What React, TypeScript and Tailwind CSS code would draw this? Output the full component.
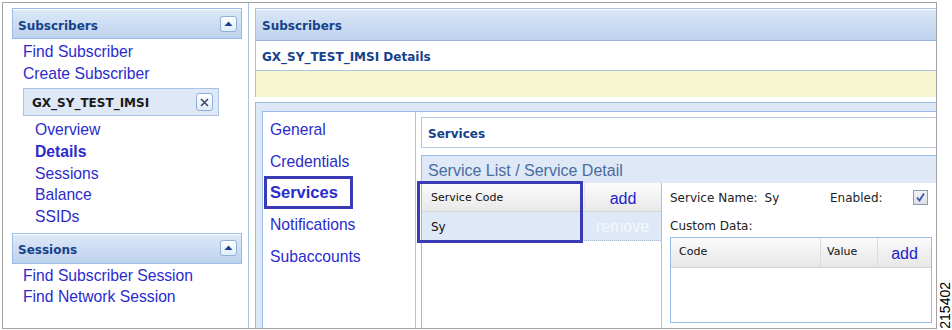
import * as React from "react";

const arial = "font-['Liberation_Sans',Arial,sans-serif]";

function CollapseButton() {
  return (
    <div className="flex h-[16px] w-[17px] items-center justify-center rounded-[3px] border border-[#8fb0d8] bg-linear-to-b from-[#ffffff] to-[#e3ecf8]">
      <svg width="9" height="6" viewBox="0 0 9 6">
        <path d="M4.5 0.5 L8.5 5 L0.5 5 Z" fill="#15428b" />
      </svg>
    </div>
  );
}

function SideHeader({ title }: { title: string }) {
  return (
    <div className="flex h-[31px] w-[230px] items-center justify-between border border-[#99bbe8] bg-linear-to-b from-[#dde9f8] to-[#bed2ed] pl-[5px] pr-[4px] shadow-[inset_0_1px_0_#ffffff]">
      <span className="pt-[4px] text-[12px] font-bold text-[#15428b]">{title}</span>
      <CollapseButton />
    </div>
  );
}

function LeftColumn() {
  return (
    <div className="flex w-[246px] shrink-0 flex-col border-r border-[#a9c3e5] pl-[9px] pt-[5px]">
      <SideHeader title="Subscribers" />
      <div className={`${arial} pl-[11px] pt-[2px] text-[15.7px] leading-[22px] text-[#2b2bcc]`}>
        <div>Find Subscriber</div>
        <div>Create Subscriber</div>
      </div>
      <div className="ml-[11px] mt-[3px] flex h-[28px] w-[196px] items-center justify-between border border-[#a9c3e5] bg-[#dfe8f6] pl-[8px] pr-[5px]">
        <span className="pt-[2px] text-[12px] font-bold text-[#1a1a1a]">GX_SY_TEST_IMSI</span>
        <div className="flex h-[18px] w-[17px] items-center justify-center rounded-[3px] border border-[#8fb0d8] bg-linear-to-b from-[#ffffff] to-[#e3ecf8]">
          <svg width="9" height="9" viewBox="0 0 9 9">
            <path d="M1 1 L8 8 M8 1 L1 8" stroke="#3a4a6a" strokeWidth="1.6" />
          </svg>
        </div>
      </div>
      <div className={`${arial} mt-[3px] pl-[23px] text-[15.7px] leading-[21.75px] text-[#2b2bcc]`}>
        <div>Overview</div>
        <div className="font-bold">Details</div>
        <div>Sessions</div>
        <div>Balance</div>
        <div>SSIDs</div>
      </div>
      <div className="mt-[5px]">
        <SideHeader title="Sessions" />
      </div>
      <div className={`${arial} mt-[1px] pl-[11px] text-[15.7px] leading-[21.5px] text-[#2b2bcc]`}>
        <div>Find Subscriber Session</div>
        <div>Find Network Session</div>
      </div>
    </div>
  );
}

function Tabs() {
  const tabs = ["General", "Credentials", "Services", "Notifications", "Subaccounts"];
  return (
    <div className={`${arial} flex w-[153px] shrink-0 flex-col border-r border-[#a9c3e5] pt-[2px] text-[15.7px] leading-[21px] text-[#2b2bcc]`}>
      {tabs.map((t) => (
        <div key={t} className="flex h-[31.6px] items-center">
          <span
            className={
              t === "Services"
                ? "ml-[1px] border-[3px] border-[#3a3ab5] py-[3px] pl-[3px] pr-[12px] text-[16.5px] font-bold"
                : "ml-[1px] border-[3px] border-transparent pl-[3px]"
            }
          >
            {t}
          </span>
        </div>
      ))}
    </div>
  );
}

function ServiceList() {
  return (
    <div className="relative w-[240px] shrink-0 border-r border-[#a9c3e5]">
      <div className="flex h-[29px] border-b border-[#d4d4d4] bg-linear-to-b from-[#fbfbfb] to-[#e9e9e9]">
        <div className="flex w-[162px] items-center pl-[9px] pt-[2px] text-[11px] text-[#111]">Service Code</div>
        <div className={`${arial} flex flex-1 items-center justify-center border-l border-[#e2e2e2] pt-[3px] text-[16px] text-[#2222cc]`}>add</div>
      </div>
      <div className="flex h-[29px] border-b border-dotted border-[#a8bcd8] bg-[#dfe8f6]">
        <div className="flex w-[162px] items-center pl-[9px] pt-[1px] text-[12px] text-[#111]">Sy</div>
        <div className={`${arial} flex flex-1 items-center justify-center pt-[2px] text-[16px] text-[#f4f7fc]`}>remove</div>
      </div>
      <div className="absolute left-[-5px] top-[-2px] h-[62px] w-[166px] border-[3px] border-[#3a3ab5]" />
    </div>
  );
}

function ServiceDetail() {
  return (
    <div className="flex flex-1 flex-col pl-[8px] text-[12px] text-[#222]">
      <div className="flex h-[29px] items-center">
        <div className="flex w-[160px]">
          <span>Service Name:</span>
          <span className="ml-[7px]">Sy</span>
        </div>
        <span className="w-[83px]">Enabled:</span>
        <div className="flex h-[15px] w-[15px] items-center justify-center border border-[#8e9cb2] bg-linear-to-b from-[#f4f4f4] to-[#dcdfe6]">
          <svg width="11" height="11" viewBox="0 0 11 11">
            <path d="M2 5.5 L4.5 8.5 L9 1.5" stroke="#2f56b0" strokeWidth="1.8" fill="none" />
          </svg>
        </div>
      </div>
      <div className="flex h-[25px] items-center pt-[2px]">Custom Data:</div>
      <div className="h-[86px] w-[262px] border border-[#99bbe8] bg-white">
        <div className="flex h-[30px] border-b border-[#d4d4d4] bg-linear-to-b from-[#fbfbfb] to-[#e7e7e7] text-[11px] text-[#111]">
          <div className="flex w-[149px] items-center pl-[8px]">Code</div>
          <div className="flex w-[57px] items-center border-l border-[#dcdcdc] pl-[6px]">Value</div>
          <div className={`${arial} flex flex-1 items-center justify-center border-l border-[#dcdcdc] pt-[2px] text-[16px] text-[#2222cc]`}>add</div>
        </div>
      </div>
    </div>
  );
}

function RightColumn() {
  return (
    <div className="flex w-[687px] shrink-0 flex-col pl-[6px] pt-[5px]">
      <div className="border-l border-[#a9c3e5]">
        <div className="flex h-[33px] items-center border-b border-t border-b-[#99b5db] border-t-[#a9c3e5] bg-linear-to-b from-[#dbe7f7] to-[#bdd2ed] pl-[6px] pt-[2px] shadow-[inset_0_1px_0_#ffffff]">
          <span className="text-[12px] font-bold text-[#15428b]">Subscribers</span>
        </div>
        <div className="flex h-[30px] items-center border-b border-[#a9c3e5] bg-white pl-[6px] pt-[3px]">
          <span className="text-[12px] font-bold text-[#15428b]">GX_SY_TEST_IMSI Details</span>
        </div>
        <div className="h-[26px] bg-[#f6f6d1]" />
      </div>
      <div className="mt-[5px] flex h-[260px] w-[700px] shrink-0 flex-col border border-[#99bbe8] bg-[#dfe8f6] pl-[6px] pt-[8px]">
        <div className="flex flex-1 border border-[#99bbe8] bg-white">
          <Tabs />
          <div className="flex flex-1 flex-col pl-[5px] pt-[5px]">
            <div className="flex h-[31px] items-center border border-[#b5c8e2] bg-white pl-[6px] pt-[2px]">
              <span className="text-[12px] font-bold text-[#15428b]">Services</span>
            </div>
            <div className="mt-[7px] flex flex-1 flex-col border-l border-t border-[#99bbe8]">
              <div className={`${arial} flex h-[27px] items-center bg-[#dfe8f6] pl-[6px] pt-[2px] text-[16px] text-[#4b6c9e]`}>
                Service List / Service Detail
              </div>
              <div className="flex flex-1">
                <ServiceList />
                <ServiceDetail />
              </div>
            </div>
          </div>
        </div>
      </div>
    </div>
  );
}

export default function App() {
  return (
    <div className="flex h-[330px] w-[952px] bg-white font-['DejaVu_Sans',sans-serif]">
      <div className="ml-[2px] mt-[2px] flex h-[327px] w-[935px] shrink-0 overflow-hidden border border-[#a3a3a3]">
        <LeftColumn />
        <RightColumn />
      </div>
      <div className="flex flex-1 items-end pb-[1px] pl-[1px]">
        <span className={`${arial} rotate-180 text-[14px] leading-[14px] text-black [writing-mode:vertical-rl]`}>215402</span>
      </div>
    </div>
  );
}
